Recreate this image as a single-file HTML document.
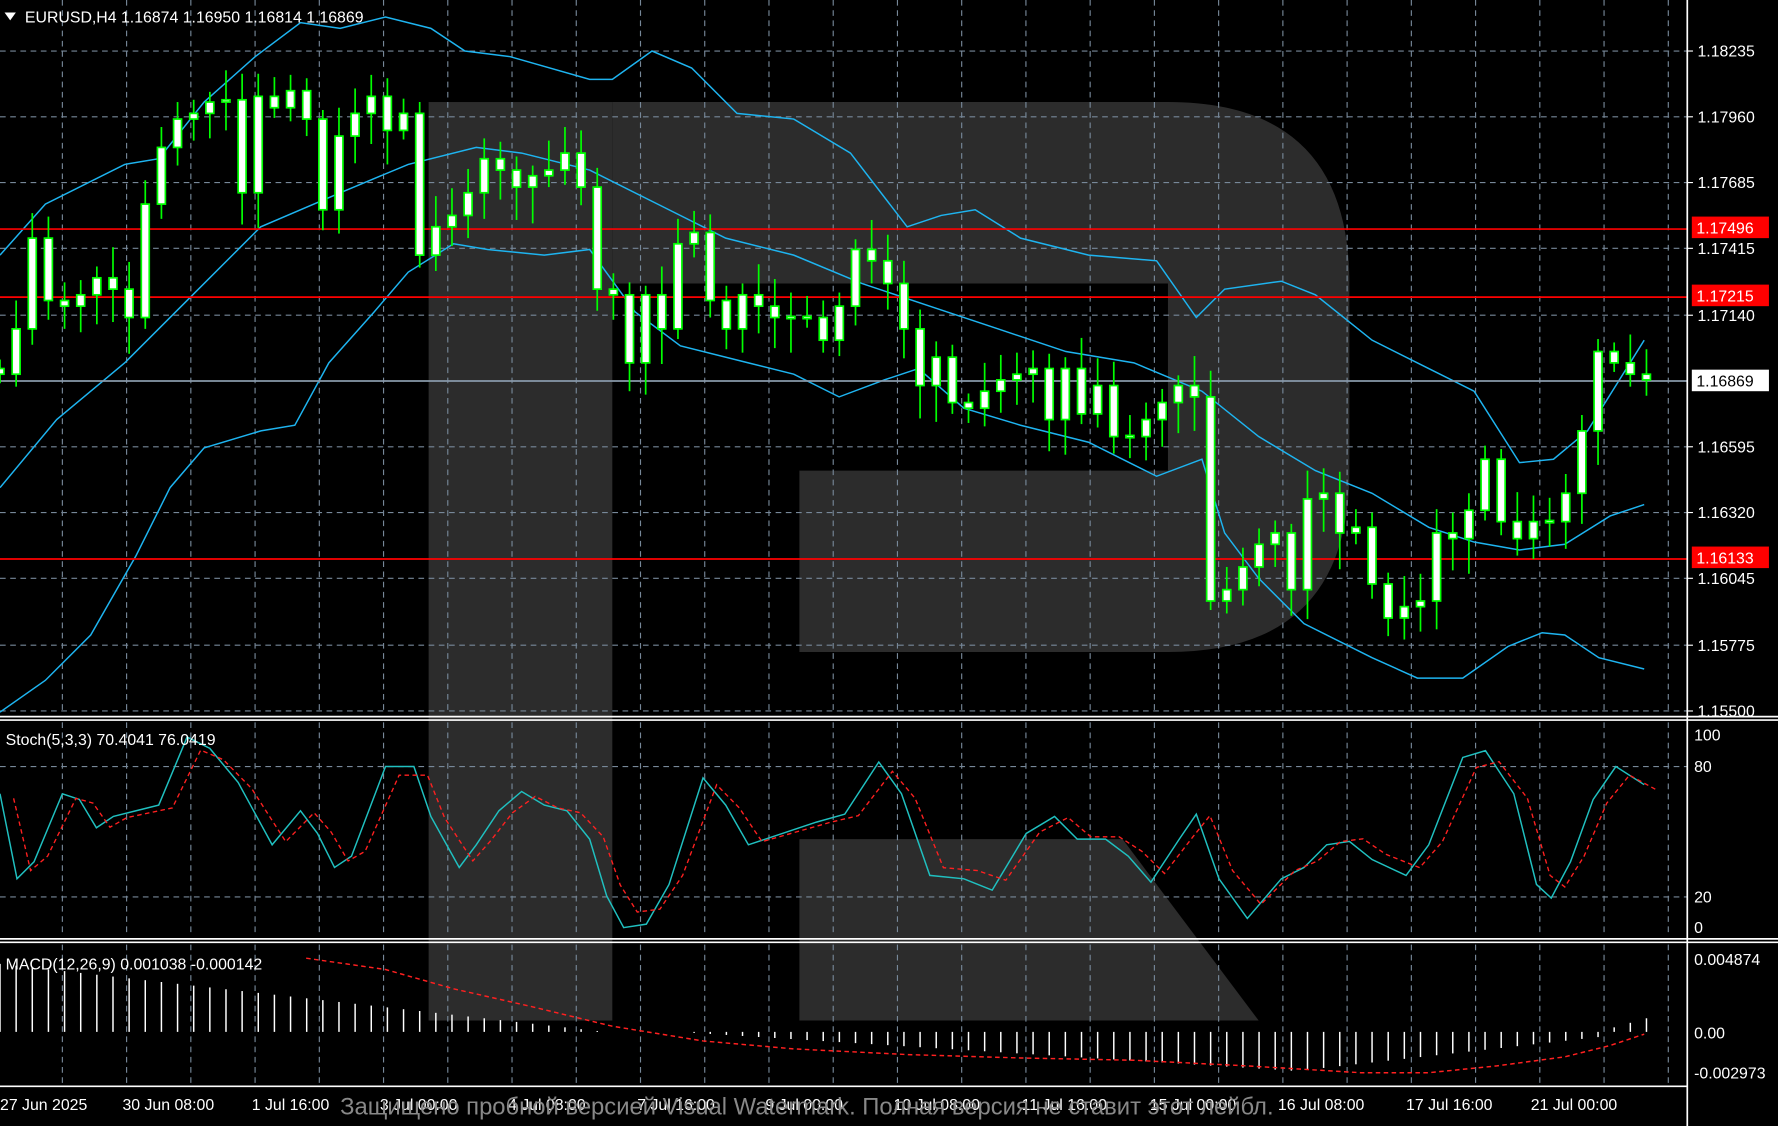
<!DOCTYPE html><html><head><style>html,body{margin:0;padding:0;background:#000;overflow:hidden}svg{display:block}text{font-family:"Liberation Sans",sans-serif;font-size:14px;fill:#fff}</style></head><body>
<svg id="s" width="1778" height="1126" viewBox="0 0 1568 993" preserveAspectRatio="none" xmlns="http://www.w3.org/2000/svg">
<rect width="1568" height="993" fill="#000"/>
<g fill="#2c2c2c">
<rect x="378" y="90" width="162" height="810"/>
<path d="M540,90 H1030 Q1190,90 1190,250 V415 Q1190,575 1030,575 H705 V415 H1030 V250 H540 Z"/>
<polygon points="705,740 990,740 1110,900 705,900"/>
</g>
<g id="grid" stroke="#778899" stroke-dasharray="5,4" stroke-width="1"></g>
<g id="bands" fill="none" stroke="#1eb4f0" stroke-width="1.3"></g>
<g stroke="#ff0000" stroke-width="1.5"><line x1="0" y1="202" x2="1488" y2="202"/><line x1="0" y1="262" x2="1488" y2="262"/><line x1="0" y1="493" x2="1488" y2="493"/></g>
<line x1="0" y1="336" x2="1488" y2="336" stroke="#8899aa" stroke-width="1.5"/>
<g id="candles"></g>
<g stroke="#fff" stroke-width="1.5"><line x1="1488" y1="0" x2="1488" y2="993"/><line x1="0" y1="632" x2="1568" y2="632"/><line x1="0" y1="635" x2="1568" y2="635"/><line x1="0" y1="828" x2="1568" y2="828"/><line x1="0" y1="831" x2="1568" y2="831"/><line x1="0" y1="958" x2="1488" y2="958"/></g>
<g id="stoch" fill="none"></g>
<g id="macd"></g>
<g id="labels"></g>
<rect x="1492" y="191" width="68" height="19" fill="#ff0000"/><text x="1496" y="206">1.17496</text>
<rect x="1492" y="251" width="68" height="19" fill="#ff0000"/><text x="1496" y="266">1.17215</text>
<rect x="1492" y="482" width="68" height="19" fill="#ff0000"/><text x="1496" y="497">1.16133</text>
<rect x="1492" y="326" width="68" height="19" fill="#fff"/><text x="1496" y="341" style="fill:#000">1.16869</text>
<polygon points="4,11 14,11 9,18" fill="#fff"/>
<text x="22" y="20">EURUSD,H4  1.16874 1.16950 1.16814 1.16869</text>
<text x="5" y="657">Stoch(5,3,3) 70.4041 76.0419</text>
<text x="5" y="855">MACD(12,26,9) 0.001038 -0.000142</text>
<text x="300" y="983" style="fill:#888;font-size:21px">Защищено пробной версией Visual Watermark. Полная версия не ставит этот лейбл.</text>
</svg>
<script>
const NS="http://www.w3.org/2000/svg";
function el(p,t,a){const e=document.createElementNS(NS,t);for(const k in a)e.setAttribute(k,a[k]);document.getElementById(p).appendChild(e);return e;}
const hy=[45,103,161,219,278,394,452,510,569,627];
hy.forEach(y=>el("grid","line",{x1:0,y1:y,x2:1488,y2:y}));
[676,791].forEach(y=>el("grid","line",{x1:0,y1:y,x2:1488,y2:y}));
for(let x=55;x<1488;x+=56.65){[[0,630],[637,826],[833,958]].forEach(r=>el("grid","line",{x1:x,y1:r[0],x2:x,y2:r[1]}));}
const pl=["1.18235","1.17960","1.17685","1.17415","1.17140","1.16595","1.16320","1.16045","1.15775","1.15500"];
hy.forEach((y,i)=>{el("labels","line",{x1:1488,y1:y,x2:1493,y2:y,stroke:"#fff"});el("labels","text",{x:1497,y:y+5}).textContent=pl[i];});
[["100",648],["80",676],["20",791],["0",818]].forEach(a=>el("labels","text",{x:1494,y:a[1]+5}).textContent=a[0]);
[["0.004874",846],["0.00",911],["-0.002973",946]].forEach(a=>el("labels","text",{x:1494,y:a[1]+5}).textContent=a[0]);
[["27 Jun 2025",0],["30 Jun 08:00",108],["1 Jul 16:00",222],["3 Jul 00:00",335],["4 Jul 08:00",448],["7 Jul 16:00",562],["9 Jul 00:00",675],["10 Jul 08:00",788],["11 Jul 16:00",901],["15 Jul 00:00",1014],["16 Jul 08:00",1127],["17 Jul 16:00",1240],["21 Jul 00:00",1350]].forEach(a=>el("labels","text",{x:a[1],y:979}).textContent=a[0]);
function poly(p,pts,attr){attr.points=pts.map(q=>q.join(",")).join(" ");el(p,"polyline",attr);}
const up=[[0,225],[40,180],[110,145],[140,140],[180,90],[225,50],[265,20],[300,25],[340,15],[380,25],[410,45],[450,50],[520,70],[540,70],[575,45],[610,60],[650,100],[700,105],[750,135],[800,200],[830,190],[860,185],[900,210],[960,225],[1020,230],[1055,280],[1080,255],[1130,248],[1160,260],[1210,300],[1260,325],[1300,345],[1340,408],[1370,405],[1400,380],[1450,300]];
const mid=[[0,430],[50,370],[110,320],[170,260],[230,200],[300,170],[360,145],[420,130],[460,135],[520,150],[580,180],[640,210],[700,225],[760,250],[820,270],[880,290],[940,310],[1000,320],[1060,345],[1110,385],[1160,415],[1210,435],[1260,465],[1300,478],[1340,485],[1380,480],[1420,455],[1450,445]];
const lo=[[0,628],[40,600],[80,560],[120,490],[150,430],[180,395],[230,380],[260,375],[290,320],[330,275],[360,240],[400,215],[430,220],[480,225],[520,220],[560,275],[600,305],[660,320],[700,330],[740,350],[780,335],[810,325],[850,360],[900,375],[960,390],[1000,410],[1020,420],[1060,405],[1080,470],[1110,510],[1150,550],[1210,580],[1250,598],[1290,598],[1330,570],[1360,558],[1380,560],[1410,580],[1450,590]];
[up,mid,lo].forEach(b=>poly("bands",b,{}));
const c=[330,290,210,265,270,260,245,255,280,180,130,105,100,90,88,170,85,95,80,105,185,120,100,85,115,100,225,200,190,170,140,150,165,155,150,135,165,255,260,320,260,290,215,205,265,290,260,270,280,280,280,300,270,220,230,250,290,340,315,355,360,345,335,330,325,370,325,365,340,385,385,370,355,340,350,530,520,500,480,470,520,440,435,470,465,515,545,535,530,470,475,450,405,460,475,460,460,435,380,310,320,330,335];
const n=c.length,sp=1452/(n-1);let prev=325;
for(let i=0;i<n;i++){const x=i*sp;const o=prev,cl=c[i];let t=Math.min(o,cl),b=Math.max(o,cl);if(b-t<2){t-=1;b+=1;}
const hi=t-8-((i*37)%20),lw=b+8+((i*53)%25);
el("candles","line",{x1:x,y1:hi,x2:x,y2:lw,stroke:"#00ff00","stroke-width":1.5});
el("candles","rect",{x:x-3.5,y:t,width:7,height:b-t,fill:"#fff",stroke:"#00ff00","stroke-width":1.5});prev=cl;}
const st=[[0,700],[15,775],[30,760],[55,700],[70,705],[85,730],[100,720],[120,715],[140,710],[165,650],[185,660],[210,690],[240,745],[265,715],[280,735],[295,765],[310,755],[340,676],[365,676],[380,720],[405,765],[420,745],[440,715],[460,698],[480,710],[500,715],[520,740],[535,790],[550,818],[570,815],[590,780],[620,686],[640,710],[660,745],[690,735],[720,725],[745,718],[775,672],[795,700],[820,772],[850,775],[875,785],[905,735],[930,720],[950,740],[975,740],[995,755],[1015,778],[1040,740],[1055,718],[1075,775],[1100,810],[1130,775],[1150,765],[1170,745],[1190,742],[1210,758],[1240,772],[1260,745],[1290,668],[1310,662],[1335,700],[1355,780],[1368,792],[1385,760],[1405,705],[1425,676],[1450,692]];
poly("stoch",st,{stroke:"#20c0c0","stroke-width":1.3});
poly("stoch",st.map(p=>[p[0]+12,p[1]*0.85+109]),{stroke:"#ff2020","stroke-width":1.2,"stroke-dasharray":"4,3"});
for(let i=0;i<n;i++){const x=i*sp;let v;
if(i<38)v=910-(60-i*1.6)*(1);else if(i<42)v=910;else if(i<100)v=910+Math.min(35,((i-42)*0.9))-(i>80?(i-80)*1.6:0);else v=910-(i-99)*4;
if(i<38)v=Math.max(v,850);el("macd","line",{x1:x,y1:910,x2:x,y2:v,stroke:"#fff","stroke-width":1.3});}
poly("macd",[[270,845],[340,855],[400,872],[470,888],[540,905],[620,918],[700,925],[800,930],[900,933],[1000,935],[1100,940],[1200,946],[1260,946],[1320,940],[1380,932],[1420,922],[1450,912]],{fill:"none",stroke:"#ff2020","stroke-dasharray":"4,3","stroke-width":1.3});
</script></body></html>
